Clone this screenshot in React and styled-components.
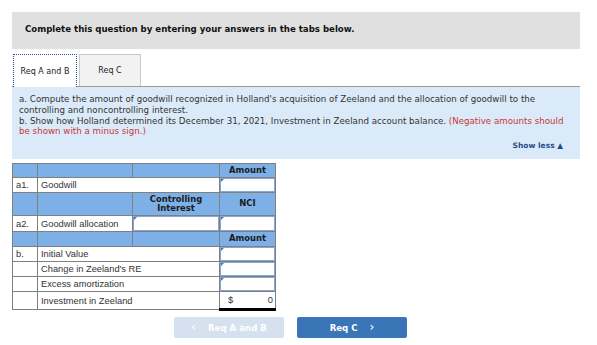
import { createGlobalStyle, styled } from 'styled-components'

const Global = createGlobalStyle`
  body {
    margin: 0;
    background: #fff;
    font-family: 'DejaVu Sans', Verdana, sans-serif;
  }
`

const Page = styled.div`
  width: 568px;
  padding: 12px 0 0 12px;
`
const Banner = styled.div`
  height: 37px;
  background: #e0e0e0;
  display: flex;
  align-items: center;
  padding: 0 0 3px 13px;
  box-sizing: border-box;
  font-size: 8.6px;
  font-weight: bold;
  color: #111;
`
const TabBar = styled.div`
  display: flex;
  align-items: flex-end;
  margin-top: 4px;
  height: 33px;
  border-bottom: 1px solid #9a9a9a;
`
const Tab = styled.div`
  box-sizing: border-box;
  display: flex;
  align-items: center;
  justify-content: center;
  font-size: 8px;
  color: #222;
  margin-left: ${p => p.$first ? '1px' : '2px'};
  width: ${p => p.$w}px;
  background: ${p => p.$active ? '#fff' : '#f2f2f2'};
  border: ${p => p.$active ? '1px dotted #2a4f8a' : '1px solid #c8c8c8'};
  border-bottom: none;
  margin-bottom: ${p => p.$active ? '-1px' : '0'};
  height: ${p => p.$active ? '33px' : '32px'};
`
const Info = styled.div`
  background: #dbeaf8;
  height: 72px;
  box-sizing: border-box;
  padding: 7px 14px 0 7px;
  font-size: 8.7px;
  line-height: 10.8px;
  color: #333;
  display: flex;
  flex-direction: column;
`
const Red = styled.span`
  color: #c9363a;
`
const ShowLess = styled.div`
  margin-top: auto;
  margin-bottom: 7px;
  margin-right: 3px;
  align-self: flex-end;
  font-size: 7.5px;
  font-weight: bold;
  color: #1f4a86;
`
const Grid = styled.table`
  margin-top: 4px;
  border-collapse: collapse;
  table-layout: fixed;
  width: 263px;
  font-family: 'Liberation Sans', Arial, sans-serif;
  font-size: 9.3px;
  color: #333;
`
const Cell = styled.td`
  border: 1px solid #808080;
  height: ${p => p.$h || 14}px;
  padding: 0 0 0 3px;
  box-sizing: border-box;
  background: ${p => p.$head ? '#7db0e6' : '#fff'};
  white-space: nowrap;
`
const HeadCell = styled(Cell)`
  font-family: 'DejaVu Sans', Verdana, sans-serif;
  font-weight: bold;
  font-size: 8.4px;
  color: #1a1a1a;
  text-align: center;
  padding: 0;
  line-height: 9.5px;
`
const InputCell = styled.td`
  border: 1px solid #808080;
  padding: 0;
  background: #fff;
  height: ${p => p.$h || 15}px;
  box-sizing: border-box;
`
const InputBox = styled.div`
  position: relative;
  height: 100%;
  box-sizing: border-box;
  background: #fff;
  border: 1px solid #86a6d6;
  &::before {
    content: '';
    position: absolute;
    left: 0;
    top: 0;
    border-top: 3px solid #3f73c6;
    border-right: 3px solid transparent;
  }
`
const TotalCell = styled.td`
  border: 1px solid #808080;
  border-bottom: 3px solid #000;
  height: 16px;
  padding: 0 2px 0 8px;
  font-size: 9.3px;
`
const TotalInner = styled.div`
  display: flex;
  justify-content: space-between;
`
const Buttons = styled.div`
  display: flex;
  gap: 13px;
  padding-left: 162px;
  margin-top: 6px;
`
const NavButton = styled.div`
  width: 110px;
  height: 21px;
  border-radius: 2px;
  display: flex;
  align-items: center;
  justify-content: center;
  gap: 12px;
  font-size: 8.6px;
  font-weight: bold;
  color: #fff;
  background: ${p => p.$disabled ? '#d5e1ef' : '#3a75b8'};
`
const Chevron = styled.span`
  font-size: 12px;
  font-weight: normal;
  line-height: 1;
  margin-top: -2px;
`

const Input = ({ h }) => (
  <InputCell $h={h}><InputBox /></InputCell>
)

const amountRows = ['Initial Value', "Change in Zeeland's RE", 'Excess amortization']

export default function App() {
  return (
    <Page>
      <Global />
      <Banner>Complete this question by entering your answers in the tabs below.</Banner>
      <TabBar>
        <Tab $first $active $w={64}>Req A and B</Tab>
        <Tab $w={62}>Req C</Tab>
      </TabBar>
      <Info>
        <div>
          a. Compute the amount of goodwill recognized in Holland's acquisition of Zeeland and the allocation of goodwill to the controlling and noncontrolling interest.
        </div>
        <div>
          b. Show how Holland determined its December 31, 2021, Investment in Zeeland account balance. <Red>(Negative amounts should be shown with a minus sign.)</Red>
        </div>
        <ShowLess>Show less ▲</ShowLess>
      </Info>
      <Grid>
        <colgroup>
          <col style={{ width: 25 }} />
          <col style={{ width: 95 }} />
          <col style={{ width: 87 }} />
          <col style={{ width: 56 }} />
        </colgroup>
        <tbody>
          <tr>
            <Cell $head /><Cell $head /><Cell $head />
            <HeadCell $head>Amount</HeadCell>
          </tr>
          <tr>
            <Cell $h={15}>a1.</Cell>
            <Cell $h={15} colSpan={2}>Goodwill</Cell>
            <Input h={15} />
          </tr>
          <tr>
            <Cell $head $h={23} /><Cell $head $h={23} />
            <HeadCell $head $h={23}>Controlling<br />Interest</HeadCell>
            <HeadCell $head $h={23}>NCI</HeadCell>
          </tr>
          <tr>
            <Cell $h={16}>a2.</Cell>
            <Cell $h={16}>Goodwill allocation</Cell>
            <Input h={16} />
            <Input h={16} />
          </tr>
          <tr>
            <Cell $head $h={15} /><Cell $head $h={15} /><Cell $head $h={15} />
            <HeadCell $head $h={15}>Amount</HeadCell>
          </tr>
          {amountRows.map((label, i) => (
            <tr key={label}>
              <Cell $h={15}>{i === 0 ? 'b.' : ''}</Cell>
              <Cell $h={15} colSpan={2}>{label}</Cell>
              <Input h={15} />
            </tr>
          ))}
          <tr>
            <Cell $h={16} />
            <Cell $h={16} colSpan={2}>Investment in Zeeland</Cell>
            <TotalCell>
              <TotalInner><span>$</span><span>0</span></TotalInner>
            </TotalCell>
          </tr>
        </tbody>
      </Grid>
      <Buttons>
        <NavButton $disabled><Chevron>‹</Chevron><span>Req A and B</span></NavButton>
        <NavButton><span>Req C</span><Chevron>›</Chevron></NavButton>
      </Buttons>
    </Page>
  )
}
